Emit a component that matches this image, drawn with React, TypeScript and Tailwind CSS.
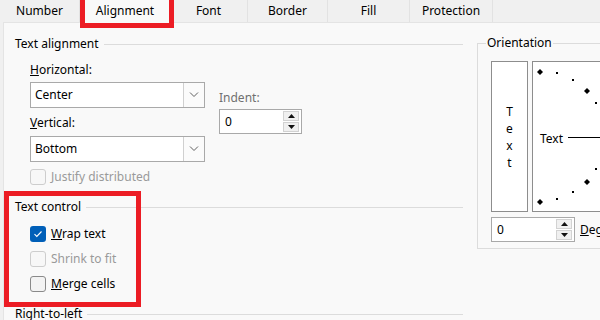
import React from "react";

const tabs = [
    { label: "Number", w: "w-[80px]" },
    { label: "Alignment", w: "w-[90px]", active: true },
    { label: "Font", w: "w-[78px]" },
    { label: "Border", w: "w-[80px]" },
    { label: "Fill", w: "w-[82px]" },
    { label: "Protection", w: "w-[83px]" },
];

const Chevron = () => (
    <svg width="10" height="6" viewBox="0 0 10 6" fill="none">
        <path d="M1 0.5 L5 4.5 L9 0.5" stroke="#606060" strokeWidth="1" />
    </svg>
);

const Select = ({ value }: { value: string }) => (
    <div className="flex h-[26px] w-[175px] border border-[#a9a9a9] bg-white">
        <div className="flex flex-1 items-center pl-[4px]">{value}</div>
        <div className="flex w-[21px] items-center justify-center border-l border-[#d0d0d0] bg-[#fbfbfb]">
            <Chevron />
        </div>
    </div>
);

const Spin = ({ w }: { w: string }) => (
    <div className={`flex h-[25px] ${w} border border-[#a9a9a9] bg-white`}>
        <div className="flex flex-1 items-center pl-[5px]">0</div>
        <div className="flex w-[18px] flex-col gap-px py-px pr-[2px]">
            <div className="flex flex-1 items-center justify-center border border-[#d2d2d2] bg-[#f0f0f0]">
                <svg width="7" height="4" viewBox="0 0 7 4">
                    <path d="M0 4 L3.5 0 L7 4 Z" fill="#111" />
                </svg>
            </div>
            <div className="flex flex-1 items-center justify-center border border-[#d2d2d2] bg-[#f0f0f0]">
                <svg width="7" height="4" viewBox="0 0 7 4">
                    <path d="M0 0 L3.5 4 L7 0 Z" fill="#111" />
                </svg>
            </div>
        </div>
    </div>
);

const Check = ({ checked, disabled }: { checked?: boolean; disabled?: boolean }) => {
    if (checked) {
        return (
            <div className="flex h-[16px] w-[16px] items-center justify-center rounded-[3px] bg-[#005fb8]">
                <svg width="10" height="8" viewBox="0 0 10 8" fill="none">
                    <path d="M1.5 4.2 L3.8 6.4 L8.5 1.5" stroke="white" strokeWidth="1.1" />
                </svg>
            </div>
        );
    }
    return (
        <div
            className={
                disabled
                    ? "h-[16px] w-[16px] rounded-[3px] border border-[#cdcdcd] bg-[#f7f7f7]"
                    : "h-[16px] w-[16px] rounded-[3px] border border-[#8a8a8a] bg-[#f3f3f3]"
            }
        />
    );
};

const Header = ({ text }: { text: string }) => (
    <div className="flex h-4 items-center">
        <span>{text}</span>
        <div className="ml-[5px] h-px flex-1 bg-[#dcdcdc]" />
    </div>
);

export default function App() {
    return (
        <div
            className="relative h-[320px] w-[600px] overflow-hidden bg-[#f0f0f0] text-[12px] leading-4 text-black"
            style={{ fontFamily: '"Noto Sans", "Open Sans", sans-serif' }}
        >
            {/* tab strip */}
            <div className="flex h-[22px]">
                {tabs.map((t) => (
                    <div
                        key={t.label}
                        className={
                            t.active
                                ? `${t.w} flex h-[23px] items-center justify-center bg-[#f9f9f9] pb-[2px]`
                                : `${t.w} flex items-center justify-center border-r border-[#e2e2e2]`
                        }
                    >
                        {t.label}
                    </div>
                ))}
            </div>

            {/* page */}
            <div className="ml-[3px] flex h-[298px] border-l border-t border-[#e4e4e4] bg-[#f9f9f9]">
                <div className="w-[459px] shrink-0 pl-[11px] pt-[13px]">
                    <Header text="Text alignment" />
                    <div className="mt-[10px] pl-[15px]">
                        <div>
                            <u>H</u>orizontal:
                        </div>
                        <div className="flex">
                            <div className="flex flex-col">
                                <div className="mt-[4px]">
                                    <Select value="Center" />
                                </div>
                                <div className="mt-[7px]">
                                    <u>V</u>ertical:
                                </div>
                                <div className="mt-[5px]">
                                    <Select value="Bottom" />
                                </div>
                                <div className="mt-[7px] flex items-center gap-[5px] text-[#9a9a9a]">
                                    <Check disabled />
                                    <span>Justify distributed</span>
                                </div>
                            </div>
                            <div className="ml-[14px] flex flex-col">
                                <div className="mt-[12px] text-[#707070]">Indent:</div>
                                <div className="mt-[3px]">
                                    <Spin w="w-[83px]" />
                                </div>
                            </div>
                        </div>
                    </div>

                    <div className="mt-[14px]">
                        <Header text="Text control" />
                    </div>
                    <div className="pl-[15px]">
                        <div className="mt-[11px] flex items-center gap-[5px]">
                            <Check checked />
                            <span>
                                <u>W</u>rap text
                            </span>
                        </div>
                        <div className="mt-[9px] flex items-center gap-[5px] text-[#9a9a9a]">
                            <Check disabled />
                            <span>Shrink to fit</span>
                        </div>
                        <div className="mt-[9px] flex items-center gap-[5px]">
                            <Check />
                            <span>
                                <u>M</u>erge cells
                            </span>
                        </div>
                    </div>
                    <div className="mt-[14px]">
                        <Header text="Right-to-left" />
                    </div>
                </div>

                {/* orientation group */}
                <div className="relative ml-[14px] mt-[20px] h-[206px] w-[200px] shrink-0 border border-[#dcdcdc] pl-[13px] pt-[17px]">
                    <span className="absolute -top-[9px] left-[8px] bg-[#f9f9f9] px-px">Orientation</span>
                    <div className="flex h-[151px]">
                        <div className="flex w-[37px] flex-col items-center justify-center border border-[#8d8d8d] bg-white leading-[17px]">
                            <span>T</span>
                            <span>e</span>
                            <span>x</span>
                            <span>t</span>
                        </div>
                        <div className="ml-[4px] w-[120px] border border-[#8d8d8d] bg-white">
                            <svg width="120" height="149" viewBox="0 0 120 149">
                                <path d="M7 7 L10 10 L7 13 L4 10 Z" fill="#000" />
                                <path d="M54 26 L57 29 L54 32 L51 29 Z" fill="#000" />
                                <path d="M7 137 L10 140 L7 143 L4 140 Z" fill="#000" />
                                <path d="M54 117 L57 120 L54 123 L51 120 Z" fill="#000" />
                                <rect x="23" y="10" width="2" height="2" fill="#000" />
                                <rect x="39" y="17" width="2" height="2" fill="#000" />
                                <rect x="62" y="40" width="2" height="2" fill="#000" />
                                <rect x="23" y="136" width="2" height="2" fill="#000" />
                                <rect x="39" y="129" width="2" height="2" fill="#000" />
                                <rect x="62" y="106" width="2" height="2" fill="#000" />
                                <text x="7" y="81" fontSize="12" fill="#000" fontFamily='"Noto Sans", sans-serif'>
                                    Text
                                </text>
                                <rect x="35" y="75" width="90" height="1" fill="#000" />
                            </svg>
                        </div>
                    </div>
                    <div className="mt-[5px] flex items-center">
                        <Spin w="w-[84px]" />
                        <span className="ml-[5px]">
                            <u>D</u>egrees
                        </span>
                    </div>
                </div>
            </div>

            {/* red annotation boxes */}
            <div className="absolute left-[80px] top-[-5px] h-[33px] w-[94px] border-[5px] border-[#ec1c24]" />
            <div className="absolute left-[4px] top-[191px] h-[116px] w-[137px] border-[5px] border-[#ec1c24]" />
        </div>
    );
}
